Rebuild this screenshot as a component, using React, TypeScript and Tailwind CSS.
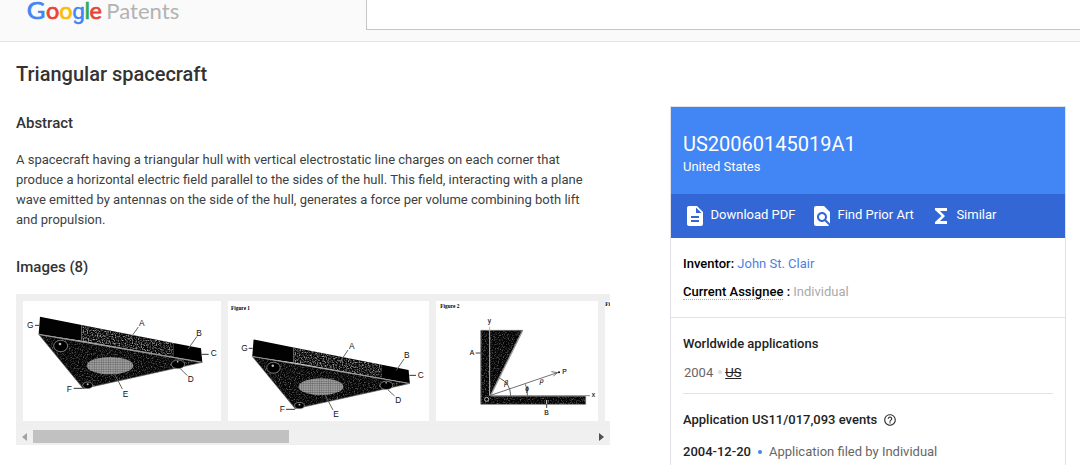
import type { ReactNode } from "react";

const label = "font-['Liberation_Sans',sans-serif] text-[25px]";

function Logo() {
    return (
        <svg width="156" height="30" viewBox="0 0 156 30" className="overflow-visible font-['Lato',sans-serif]">
            <g fontSize="23.5" strokeWidth="0.7">
                <text x="-1.2" y="18.5" fill="#4285f4" stroke="#4285f4" textLength="18.6" lengthAdjust="spacingAndGlyphs">G</text>
                <text x="18.1" y="18.5" fill="#ea4335" stroke="#ea4335">o</text>
                <text x="31.2" y="18.5" fill="#fbbc05" stroke="#fbbc05">o</text>
                <text x="44.2" y="18.5" fill="#4285f4" stroke="#4285f4" fontSize="22.5" strokeWidth="0.5" className="font-['Roboto',sans-serif]">g</text>
                <text x="56.6" y="18.5" fill="#34a853" stroke="#34a853">l</text>
                <text x="61.5" y="18.5" fill="#ea4335" stroke="#ea4335">e</text>
            </g>
            <text x="78.3" y="18.5" fontSize="21.5" fill="#b3b3b3" textLength="73" lengthAdjust="spacingAndGlyphs">Patents</text>
        </svg>
    );
}

function Speckle() {
    return (
        <defs>
            <filter id="speckle" x="0" y="0" width="1" height="1">
                <feTurbulence type="fractalNoise" baseFrequency="0.26" numOctaves="2" seed="4" />
                <feColorMatrix values="0 0 0 0 0.5  0 0 0 0 0.5  0 0 0 0 0.5  2.5 0 0 0 -1.15" />
                <feComposite in2="SourceGraphic" operator="in" result="dots" />
                <feMerge>
                    <feMergeNode in="SourceGraphic" />
                    <feMergeNode in="dots" />
                </feMerge>
            </filter>
            <filter id="speckleFine" x="0" y="0" width="1" height="1" colorInterpolationFilters="sRGB">
                <feTurbulence type="fractalNoise" baseFrequency="0.26" numOctaves="2" seed="9" />
                <feColorMatrix values="0 0 0 0 0.5  0 0 0 0 0.5  0 0 0 0 0.5  2.2 0 0 0 -1.05" />
                <feComposite in2="SourceGraphic" operator="in" result="dots" />
                <feMerge>
                    <feMergeNode in="SourceGraphic" />
                    <feMergeNode in="dots" />
                </feMerge>
            </filter>
            <filter id="speckleMid" x="0" y="0" width="1" height="1" colorInterpolationFilters="sRGB">
                <feTurbulence type="fractalNoise" baseFrequency="0.26" numOctaves="2" seed="4" />
                <feColorMatrix values="0 0 0 0 0.6  0 0 0 0 0.6  0 0 0 0 0.6  3 0 0 0 -1.3" />
                <feComposite in2="SourceGraphic" operator="in" result="dots" />
                <feMerge>
                    <feMergeNode in="SourceGraphic" />
                    <feMergeNode in="dots" />
                </feMerge>
            </filter>
            <pattern id="mesh" width="7" height="7" patternUnits="userSpaceOnUse">
                <rect width="7" height="7" fill="#a0a0a0" />
                <path d="M0 0H7M0 0V7" stroke="#444" strokeWidth="1.8" />
            </pattern>
        </defs>
    );
}

function Craft() {
    return (
        <>
            <path d="M86 148L577 232L220 311Z" fill="#050505" filter="url(#speckleFine)" />
            <path d="M90 95L215 120V167L86 148Z" fill="#020202" />
            <path d="M215 120L490 174V216L215 167Z" fill="#050505" filter="url(#speckleMid)" />
            <path d="M490 174L573 190L577 232L490 216Z" fill="#000" />
            <path d="M86 148L577 232" stroke="#999" strokeWidth="3.5" />
            <path d="M215 120V167" stroke="#777" strokeWidth="2" />
            <path d="M86 148L220 311L577 232" fill="none" stroke="#666" strokeWidth="2" />
            <ellipse cx="300" cy="242" rx="70" ry="26" fill="url(#mesh)" />
            <g fill="#000" stroke="#aaa" strokeWidth="2">
                <ellipse cx="152" cy="183" rx="21" ry="17" />
                <ellipse cx="504" cy="238" rx="20" ry="13" />
                <ellipse cx="233" cy="301" rx="15" ry="10" />
            </g>
            <g fill="#bbb">
                <circle cx="150" cy="177" r="4" />
                <circle cx="503" cy="230" r="2.5" />
                <circle cx="233" cy="298" r="3" />
            </g>
        </>
    );
}

function PerspectiveFigure() {
    return (
        <svg width="198" height="120" viewBox="39 48 594 360" className="bg-white">
            <Speckle />
            <Craft />
            <path d="M75 121H88M576 208H596M191 310H218" stroke="#333" strokeWidth="3" />
            <path d="M385 126L357 165M561 154L534 192M511 251L532 272M337 312L312 264" stroke="#666" strokeWidth="3" />
            <g className={label} fill="#111">
                <text x="51" y="130">G</text>
                <text x="387" y="123">A</text>
                <text x="559" y="153">B</text>
                <text x="602" y="214">C</text>
                <text x="533" y="291">D</text>
                <text x="338" y="336">E</text>
                <text x="170" y="321">F</text>
            </g>
        </svg>
    );
}

function FigureOne() {
    return (
        <svg width="201" height="120" viewBox="24 48 603 360" className="bg-white">
            <text x="33" y="76" className="font-['Liberation_Serif',serif] text-[16px] font-bold">Figure 1</text>
            <g transform="matrix(0.963 0 0 0.963 14 72)">
                <Craft />
            </g>
            <path d="M86 190H98M568 271H588M198 373H225" stroke="#333" strokeWidth="3" />
            <path d="M384 195L360 231M552 222L529 256M504 315L524 333M339 375L314 328" stroke="#666" strokeWidth="3" />
            <g className={label} fill="#111">
                <text x="64" y="198">G</text>
                <text x="387" y="192">A</text>
                <text x="552" y="220">B</text>
                <text x="593" y="279">C</text>
                <text x="526" y="354">D</text>
                <text x="340" y="396">E</text>
                <text x="179" y="382">F</text>
            </g>
        </svg>
    );
}

function FigureTwo() {
    return (
        <svg width="162" height="120" viewBox="18 48 486 360" className="bg-white">
            <text x="31" y="68" className="font-['Liberation_Serif',serif] text-[16px] font-bold">Figure 2</text>
            <path d="M152 136H278L182 330V334H467V358H152Z" fill="#040404" filter="url(#speckleFine)" />
            <path d="M278 136H153V358H467V334" fill="none" stroke="#777" strokeWidth="2" />
            <path d="M278 136L182 331" stroke="#999" strokeWidth="4" />
            <path d="M179 126V332" stroke="#bbb" strokeWidth="3" />
            <path d="M182 332H480" stroke="#888" strokeWidth="3" />
            <path d="M182 331L382 263M364 260L383 263L370 273" fill="none" stroke="#555" strokeWidth="2.5" />
            <path d="M208 279Q241 293 242 332M286 298Q294 312 292 332" fill="none" stroke="#444" strokeWidth="2.5" />
            <path d="M137 204H158M350 345V369" stroke="#444" strokeWidth="3" />
            <path d="M350 345V357" stroke="#ccc" strokeWidth="3" />
            <circle cx="170" cy="343" r="6" fill="#000" stroke="#bbb" strokeWidth="3" />
            <circle cx="387" cy="262" r="3" />
            <g className="font-['Liberation_Sans',sans-serif] text-[20px]" fill="#111" stroke="#111" strokeWidth="0.4">
                <text x="173" y="115">y</text>
                <text x="119" y="211">A</text>
                <text x="397" y="267">P</text>
                <text x="485" y="337">x</text>
                <text x="343" y="389">B</text>
                <g fontStyle="italic">
                    <text x="223" y="300">β</text>
                    <text x="286" y="319">ϕ</text>
                    <text x="329" y="295">ρ</text>
                </g>
            </g>
        </svg>
    );
}

function Action({ icon, children, className }: { icon: ReactNode; children: ReactNode; className?: string }) {
    return (
        <a className={`flex items-center ${className ?? ""}`}>
            <svg width="24" height="24" viewBox="0 0 24 24" fill="#fff" className="mt-0.5 shrink-0">{icon}</svg>
            <span className="ml-[3.5px]">{children}</span>
        </a>
    );
}

export default function App() {
    return (
        <div className="h-[465px] w-[1080px] overflow-hidden bg-white font-['Roboto',sans-serif] text-[13px] text-[#3c3f43]">
            <header className="flex h-[42px] items-start justify-between border-b border-[#e5e5e5] bg-[#fafafa] pl-7">
                <Logo />
                <div className="h-[30px] w-[714px] border-b border-l border-[#c6c6c6] bg-white" />
            </header>

            <main className="flex items-start pl-4">
                <section className="w-[594px] shrink-0">
                    <h1 className="mt-5 text-[20px] leading-6 font-medium text-[#333]">Triangular spacecraft</h1>
                    <h2 className="mt-[27px] text-[15px] leading-5 font-medium text-[#333]">Abstract</h2>
                    <p className="mt-[17px] leading-5 whitespace-nowrap">
                        A spacecraft having a triangular hull with vertical electrostatic line charges on each corner that<br />
                        produce a horizontal electric field parallel to the sides of the hull. This field, interacting with a plane<br />
                        wave emitted by antennas on the side of the hull, generates a force per volume combining both lift<br />
                        and propulsion.
                    </p>
                    <h2 className="mt-[27px] text-[15px] leading-5 font-medium text-[#333]">Images (8)</h2>

                    <div className="mt-[17px] h-[151px] overflow-hidden bg-[#efefef] pt-[7px]">
                        <div className="flex gap-[7px] pl-[7px] [&>svg]:shrink-0">
                            <PerspectiveFigure />
                            <FigureOne />
                            <FigureTwo />
                            <svg width="162" height="120" viewBox="0 0 486 360" className="bg-white">
                                <text x="1" y="16" className="font-['Liberation_Serif',serif] text-[16px] font-bold">Fi</text>
                            </svg>
                        </div>
                        <div className="mt-[9px] flex h-[13px] items-center justify-between bg-[#f0f0f0] px-[6px]">
                            <svg width="5" height="8" viewBox="0 0 5 8"><path d="M5 0V8L0 4Z" fill="#a3a3a3" /></svg>
                            <div className="mr-auto ml-[6px] h-[13px] w-64 bg-[#c1c1c1]" />
                            <svg width="5" height="8" viewBox="0 0 5 8"><path d="M0 0V8L5 4Z" fill="#505050" /></svg>
                        </div>
                    </div>
                </section>

                <aside className="mt-[64px] ml-[60px] h-[370px] w-[396px] shrink-0 border border-b-0 border-[#dfe2e6]">
                    <div className="h-[87px] bg-[#4285f4] pt-[25px] pl-3 text-white">
                        <div className="text-[20px] leading-6">US20060145019A1</div>
                        <div className="leading-[22px]">United States</div>
                    </div>
                    <div className="flex h-11 items-center bg-[#3367d6] pb-0.5 pl-3 text-white">
                        <Action icon={<path d="M14 2H6c-1.1 0-2 .9-2 2v16c0 1.1.9 2 2 2h12c1.1 0 2-.9 2-2V8l-6-6zm2 16H8v-2h8v2zm0-4H8v-2h8v2zm-3-5V3.5L18.5 9H13z" />}>
                            Download PDF
                        </Action>
                        <Action className="ml-[14.5px]" icon={<path d="M20 19.59V8l-6-6H6c-1.1 0-1.99.9-1.99 2L4 20c0 1.1.89 2 1.99 2H18c.45 0 .85-.15 1.19-.4l-4.43-4.43c-.8.52-1.74.83-2.76.83-2.76 0-5-2.24-5-5s2.24-5 5-5 5 2.24 5 5c0 1.02-.31 1.96-.83 2.75L20 19.59zM9 13c0 1.66 1.34 3 3 3s3-1.34 3-3-1.34-3-3-3-3 1.34-3 3z" />}>
                            Find Prior Art
                        </Action>
                        <Action className="ml-[15px]" icon={<path d="M18 4H6v2l6.5 6L6 18v2h12v-3h-7l5-5-5-5h7z" />}>
                            Similar
                        </Action>
                    </div>

                    <div className="h-20 border-b border-[#dfe2e6] pt-4 pl-3">
                        <div className="leading-5">
                            <span className="font-medium text-black">Inventor:</span> <a className="text-[#4f80e1]">John St. Clair</a>
                        </div>
                        <div className="mt-2 leading-5 text-[#aaa]">
                            <span className="border-b border-dotted border-[#aaa] font-medium text-black">Current Assignee</span>
                            <span className="font-medium text-black"> :</span> Individual
                        </div>
                    </div>

                    <div className="px-3 pt-4">
                        <h3 className="leading-5 font-medium text-[#222]">Worldwide applications</h3>
                        <div className="mt-[9px] flex h-[31px] items-start border-b border-[#dfe2e6] pl-px leading-5 text-[#666]">
                            <span>2004</span>
                            <span className="mt-[7px] mr-[3px] ml-[5px] size-1 rounded-full bg-[#ddd]" />
                            <span className="text-[#222] [text-decoration:underline_line-through]">US</span>
                        </div>
                        <h3 className="mt-4 flex items-center leading-5 font-medium text-[#222]">
                            Application US11/017,093 events
                            <svg width="14" height="14" viewBox="0 0 24 24" fill="#333" className="ml-[6px]">
                                <path d="M11 18h2v-2h-2v2zm1-16C6.48 2 2 6.48 2 12s4.48 10 10 10 10-4.48 10-10S17.52 2 12 2zm0 18c-4.41 0-8-3.59-8-8s3.59-8 8-8 8 3.59 8 8-3.59 8-8 8zm0-14c-2.21 0-4 1.79-4 4h2c0-1.1.9-2 2-2s2 .9 2 2c0 2-3 1.75-3 5h2c0-2.25 3-2.5 3-5 0-2.21-1.79-4-4-4z" />
                            </svg>
                        </h3>
                        <div className="mt-[11px] flex items-center leading-5 text-[#666]">
                            <span className="mt-px font-medium text-[#222]">2004-12-20</span>
                            <span className="mx-[7px] size-1 rounded-full bg-[#4285f4]" />
                            <span>Application filed by Individual</span>
                        </div>
                    </div>
                </aside>
            </main>
        </div>
    );
}
